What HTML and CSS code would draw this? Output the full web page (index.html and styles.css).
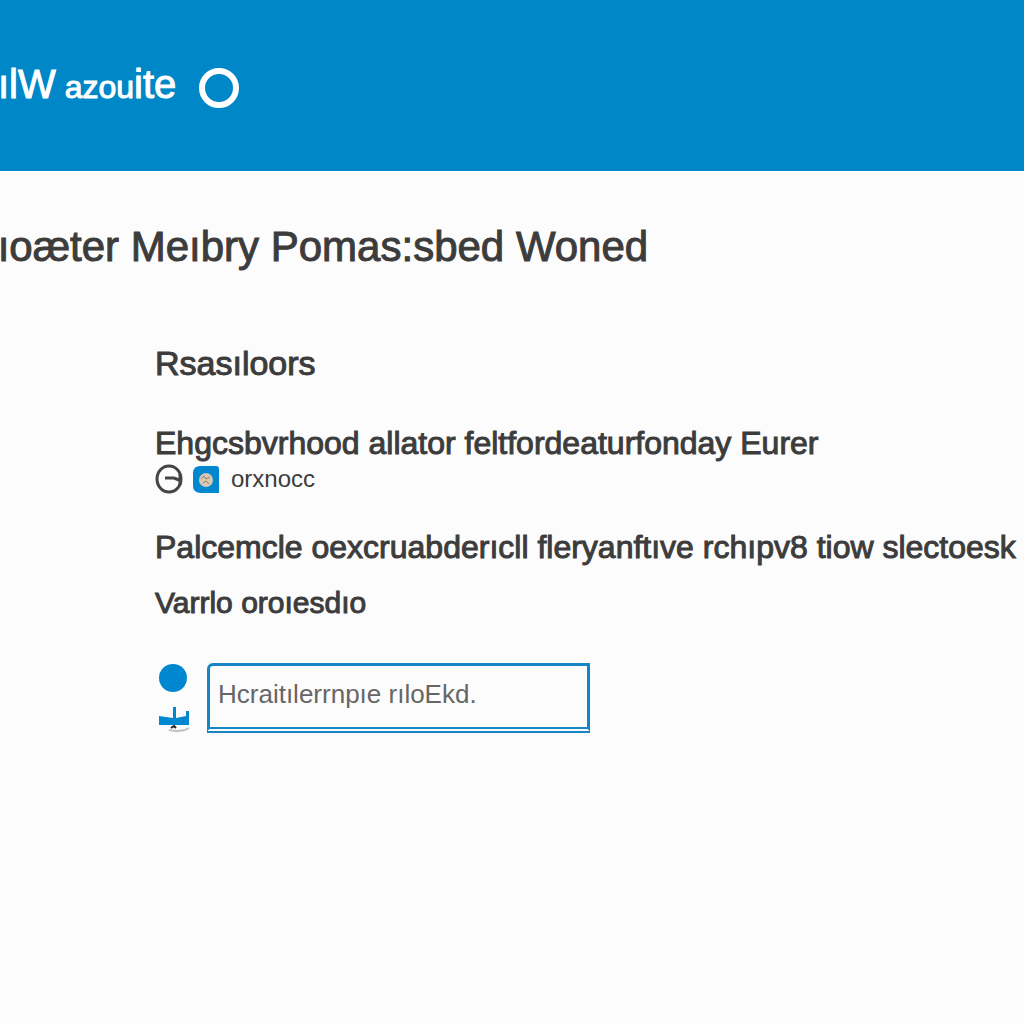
FILE: index.html
```html
<!DOCTYPE html>
<html lang="en">
<head>
    <meta charset="UTF-8">
    <meta name="viewport" content="width=device-width, initial-scale=1.0">
    <title>ılW azoute</title>
    <link rel="stylesheet" href="styles.css">
</head>
<body>
    <header class="top_bar">
        <span class="brand">ılW<span class="brand_mid"> azou</span>ite</span>
        <svg class="brand_ring" viewBox="0 0 42 42"><circle cx="21" cy="21" r="17"/></svg>
    </header>

    <main>
        <h1 class="page_title">ııoæter Meıbry Pomas:sbed Woned</h1>

        <div class="content">
            <h2 class="section_title">Rsasıloors</h2>

            <!--intro and source row-->
            <p class="text">Ehgcsbvrhood allator feltfordeaturfonday Eurer</p>
            <div class="source_row">
                <svg class="icon" viewBox="0 0 28 30">
                    <ellipse class="line" cx="14" cy="15" rx="12" ry="13"/>
                    <path class="line" d="M10 14h9l5 2M25 10v11"/>
                </svg>
                <svg class="icon" viewBox="0 0 28 30">
                    <path class="fill" d="M7 2H23Q26 2 26 5V29H8Q0 29 0 22V8Q1 2 7 2Z"/>
                    <circle class="seal" cx="13" cy="16" r="7"/>
                    <path class="seal_mark" d="M8 15l3-3 2 3 4-2M10 19l3-2 3 3"/>
                </svg>
                <span class="source_name">orxnocc</span>
            </div>

            <p class="text">Palcemcle oexcruabderıcll fleryanftıve rchıpv8 tiow slectoesk r</p>
            <label class="field_label" for="field">Varrlo oroıesdıo</label>

            <div class="field_row">
                <svg class="field_icon" viewBox="0 0 36 72">
                    <circle class="fill" cx="18" cy="15" r="14"/>
                    <path class="fill" d="M4 53L18 55V44H21V55L31 53V48H34V62H4Z"/>
                    <path class="mark" d="M16 65l3-2 2 2"/>
                    <path class="shade" d="M14 67Q26 70 34 65"/>
                </svg>
                <input class="field" id="field" type="text" placeholder="Hcraitılerrnpıe rıloEkd.">
            </div>
        </div>
    </main>
</body>
</html>
```
FILE: styles.css
```css
* {box-sizing:border-box;padding:0;margin:0;}
body {background:#fcfcfc;color:#3c3c3c;font-family:"Liberation Sans",sans-serif;overflow-x:hidden;}

/*header*/
.top_bar {display:flex;align-items:center;gap:22px;height:171px;padding-top:4px;background:#0087c7;color:#fff;}
.brand {margin-left:-2px;margin-bottom:4px;font-size:40px;line-height:48px;white-space:nowrap;-webkit-text-stroke:1px #fff;}
.brand_mid {font-size:32px;}
.brand_ring {width:42px;height:42px;fill:none;stroke:#fff;stroke-width:6;}

/*titles*/
.page_title {margin-left:-14px;padding-top:48px;font-size:42px;line-height:56px;font-weight:400;white-space:nowrap;-webkit-text-stroke:1px #3c3c3c;}
.content {padding:60px 0 0 155px;}
.section_title {font-size:34px;line-height:56px;font-weight:400;-webkit-text-stroke:1px #3c3c3c;}

/*text*/
.text {font-size:32px;line-height:40px;white-space:nowrap;-webkit-text-stroke:1px #3c3c3c;}
.section_title + .text {margin-top:32px;}
.source_row {display:flex;align-items:center;gap:10px;height:32px;margin-bottom:32px;}
.icon {width:28px;height:30px;}
.line {fill:none;stroke:#444;stroke-width:3;}
.fill {fill:#0087cf;}
.seal {fill:#d8c9b3;}
.seal_mark {fill:none;stroke:#927d62;stroke-width:1;}
.source_name {font-size:24px;}
.field_label {display:block;margin-top:16px;font-size:30px;line-height:40px;-webkit-text-stroke:1px #3c3c3c;}

/*field*/
.field_row {display:flex;gap:16px;margin-top:40px;}
.field_icon {width:36px;height:72px;}
.mark {fill:none;stroke:#222;stroke-width:2;}
.shade {fill:none;stroke:#c6c0c4;stroke-width:2;}
.field {width:383px;height:70px;padding:0 8px 4px;border:3px solid #1585c4;border-bottom-style:double;border-bottom-width:6px;border-radius:6px 0 0 0;background:#fcfcfc;font-family:inherit;font-size:26px;color:#666;}
.field::placeholder {color:#666;opacity:1;}
```
